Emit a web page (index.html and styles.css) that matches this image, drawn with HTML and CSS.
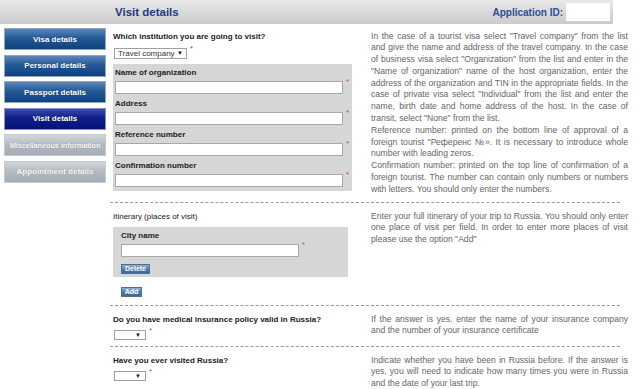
FILE: index.html
```html
<!DOCTYPE html>
<html lang="en">
<head>
    <meta charset="UTF-8">
    <meta name="viewport" content="width=device-width, initial-scale=1.0">
    <title>Visit details</title>
    <link rel="stylesheet" href="styles.css">
</head>
<body>
    <div class="header">
        <div class="header-title">Visit details</div>
        <div class="app-id">Application ID: <span class="app-box"></span></div>
    </div>

    <div class="layout">
        <nav class="sidebar">
            <a class="nav-btn">Visa details</a>
            <a class="nav-btn">Personal details</a>
            <a class="nav-btn">Passport details</a>
            <a class="nav-btn active">Visit details</a>
            <a class="nav-btn disabled long">Miscellaneous information</a>
            <a class="nav-btn disabled">Appointment details</a>
        </nav>

        <main class="content">
            <section class="section first">
                <div class="form-col">
                    <div class="q-label">Which institution you are going to visit?</div>
                    <div class="select-row">
                        <span class="select wide">Travel company <span class="arrow">&#9660;</span></span><span class="req">*</span>
                    </div>
                    <div class="grey-box">
                        <div class="field-label">Name of organization</div>
                        <div class="field"><input type="text" class="text-input"><span class="req">*</span></div>
                        <div class="field-label">Address</div>
                        <div class="field"><input type="text" class="text-input"><span class="req">*</span></div>
                        <div class="field-label">Reference number</div>
                        <div class="field"><input type="text" class="text-input"><span class="req">*</span></div>
                        <div class="field-label">Confirmation number</div>
                        <div class="field"><input type="text" class="text-input"><span class="req">*</span></div>
                    </div>
                </div>
                <div class="help">
                    In the case of a tourist visa select "Travel company" from the list and give the name and address of the travel company. In the case of business visa select "Organization" from the list and enter in the "Name of organization" name of the host organization, enter the address of the organization and TIN in the appropriate fields. In the case of private visa select "Individual" from the list and enter the name, birth date and home address of the host. In the case of transit, select "None" from the list.<br>
                    Reference number: printed on the bottom line of approval of a foreign tourist "Референс №». It is necessary to introduce whole number with leading zeros.<br>
                    Confirmation number: printed on the top line of confirmation of a foreign tourist. The number can contain only numbers or numbers with letters. You should only enter the numbers.
                </div>
            </section>

            <section class="section itinerary">
                <div class="form-col">
                    <div class="itin-label">Itinerary (places of visit)</div>
                    <div class="grey-box city-box">
                        <div class="field-label">City name</div>
                        <div class="field"><input type="text" class="text-input city"><span class="req">*</span></div>
                        <button type="button" class="small-btn">Delete</button>
                    </div>
                    <button type="button" class="small-btn add">Add</button>
                </div>
                <div class="help">
                    Enter your full itinerary of your trip to Russia. You should only enter one place of visit per field. In order to enter more places of visit please use the option "Add"
                </div>
            </section>

            <section class="section">
                <div class="form-col">
                    <div class="q-label">Do you have medical insurance policy valid in Russia?</div>
                    <div class="select-row short">
                        <span class="select narrow"><span class="arrow">&#9660;</span></span><span class="req">*</span>
                    </div>
                </div>
                <div class="help">
                    If the answer is yes, enter the name of your insurance company and the number of your insurance certificate
                </div>
            </section>

            <section class="section">
                <div class="form-col">
                    <div class="q-label">Have you ever visited Russia?</div>
                    <div class="select-row short">
                        <span class="select narrow"><span class="arrow">&#9660;</span></span><span class="req">*</span>
                    </div>
                </div>
                <div class="help">
                    Indicate whether you have been in Russia before. If the answer is yes, you will need to indicate how many times you were in Russia and the date of your last trip.
                </div>
            </section>
        </main>
    </div>
</body>
</html>
```

FILE: styles.css
```css
* {
    box-sizing: border-box;
}
body {
    margin: 0;
    width: 640px;
    background-color: #fff;
    color: #222;
    font-family: 'Liberation Sans', Arial, sans-serif;
    font-size: 8px;
    overflow: hidden;
}
.header {
    width: 613px;
    height: 24px;
    display: flex;
    align-items: center;
    justify-content: space-between;
    padding-left: 115px;
    padding-right: 3px;
    background: linear-gradient(#e9e9e9, #cbcbcb);
}
.header-title {
    font-size: 11.5px;
    font-weight: bold;
    color: #1d3b80;
}
.app-id {
    display: flex;
    align-items: center;
    gap: 3px;
    font-size: 10px;
    font-weight: bold;
    color: #2a4e98;
}
.app-box {
    width: 44px;
    height: 18px;
    background-color: #fff;
}
.layout {
    display: flex;
}
.sidebar {
    width: 110px;
    flex-shrink: 0;
    display: flex;
    flex-direction: column;
    gap: 4.6px;
    padding: 4px 0 0 4px;
}
.nav-btn {
    width: 102px;
    height: 22px;
    display: flex;
    align-items: center;
    justify-content: center;
    color: #fff;
    font-weight: bold;
    font-size: 8px;
    white-space: nowrap;
    border: 1px solid #9aa6b4;
    background: linear-gradient(#5c87bb, #235a97 45%, #0f4180);
    text-shadow: 0 0 1px rgba(0,0,0,0.4);
}
.nav-btn.active {
    background: linear-gradient(#3a4cae, #101e88 45%, #07127a);
    border-color: #8a90b8;
}
.nav-btn.disabled {
    background: linear-gradient(#d2d6db, #b4bac2 50%, #a5acb5);
    border-color: #c6c9cd;
    color: #f8f8f8;
    text-shadow: 0 0 1px rgba(90,100,110,0.5);
}
.nav-btn.long {
    font-size: 7.4px;
    letter-spacing: -0.1px;
}
.content {
    width: 510px;
}
.section {
    display: grid;
    grid-template-columns: 261px 249px;
    padding-top: 8px;
    padding-bottom: 6px;
    border-bottom: 1px dashed #9a9a9a;
}
.section.first {
    padding-top: 6.5px;
    padding-bottom: 6px;
}
.section.itinerary {
    padding-bottom: 8px;
}
.form-col {
    padding-left: 3px;
}
.q-label {
    font-weight: bold;
    line-height: 11px;
    color: #222;
}
.itin-label {
    line-height: 11px;
    color: #222;
}
.select-row {
    margin-top: 6px;
    padding-left: 1px;
    height: 11px;
    display: flex;
    align-items: flex-start;
}
.select-row.short {
    margin-top: 5px;
    height: 10px;
}
.select {
    height: 100%;
    display: inline-flex;
    align-items: center;
    justify-content: space-between;
    padding: 0 3px 0 3px;
    border: 1px solid #a0a0a0;
    background-color: #fff;
    color: #333;
    font-size: 8px;
}
.select.wide {
    width: 73px;
}
.select.narrow {
    width: 32px;
    justify-content: flex-end;
    padding-right: 4px;
}
.arrow {
    font-size: 6px;
    color: #111;
}
.req {
    color: #d04040;
    font-size: 8px;
    line-height: 8px;
    margin-left: 3px;
    margin-top: -3px;
}
.grey-box {
    margin-top: 5.5px;
    width: 239px;
    padding: 2.5px 0 4px 2px;
    background-color: #d6d6d6;
}
.field-label {
    font-weight: bold;
    line-height: 11px;
    color: #222;
    margin-bottom: 3.5px;
}
.field {
    display: flex;
    align-items: flex-start;
    margin-bottom: 3.5px;
}
.field:last-child {
    margin-bottom: 0;
}
.text-input {
    width: 228px;
    height: 13px;
    margin: 0;
    padding: 0 2px;
    border: 1px solid #a8a8a8;
    background-color: #fff;
    font-family: inherit;
    font-size: 8px;
}
.grey-box.city-box {
    margin-top: 5.5px;
    width: 235px;
    padding: 2.5px 0 3px 8px;
}
.text-input.city {
    width: 178px;
}
.small-btn {
    display: block;
    height: 10px;
    margin: 6.5px 0 0 0;
    padding: 0 3px;
    border: 1px solid #5a6c80;
    background: linear-gradient(#8eb0d6, #4a79b0 55%, #3a67a0);
    color: #fff;
    font-family: inherit;
    font-size: 7px;
    font-weight: bold;
    line-height: 8px;
    cursor: pointer;
}
.small-btn.add {
    margin: 10px 0 0 8px;
    width: 21px;
    padding: 0;
}
.help {
    margin-right: -8px;
    color: #666;
    font-size: 8.6px;
    line-height: 11.8px;
    text-align: justify;
}
```
